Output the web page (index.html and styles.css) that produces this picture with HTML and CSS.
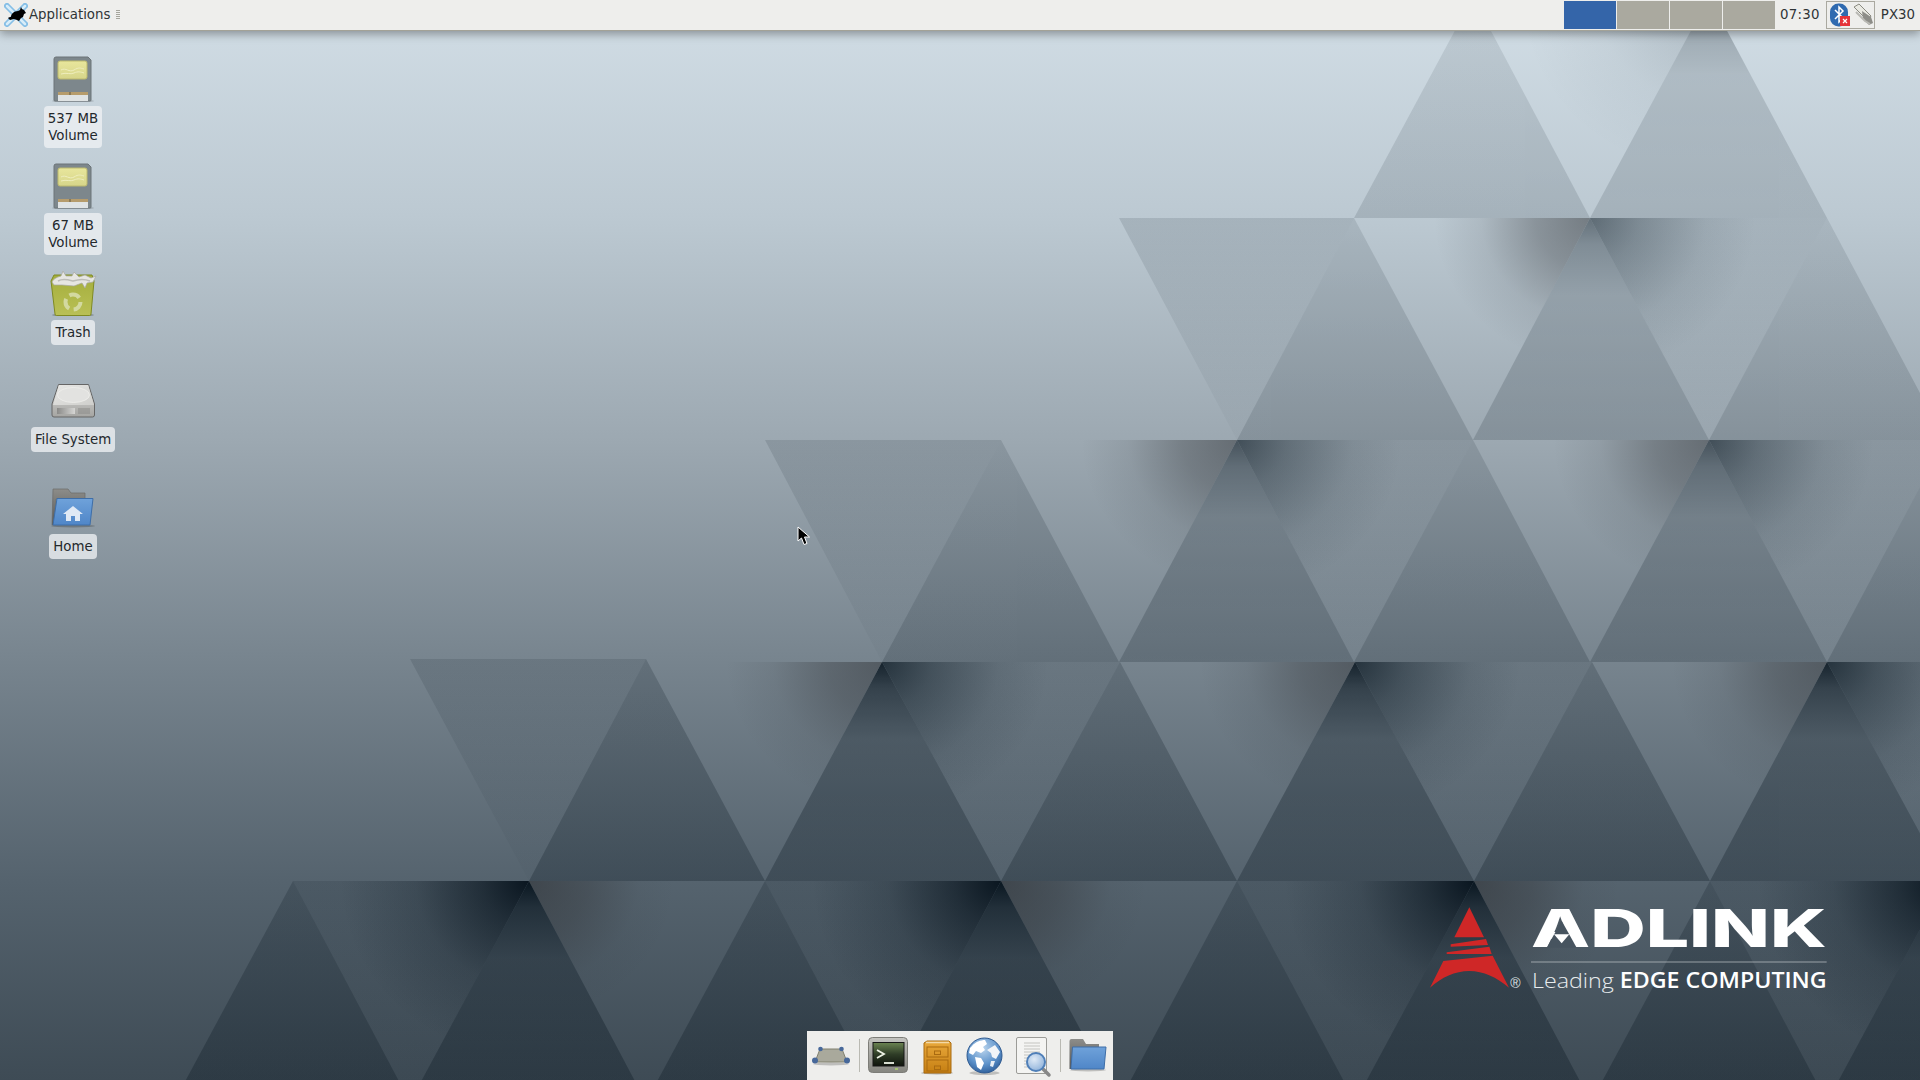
FILE: index.html
```html
<!DOCTYPE html>
<html lang="en">
<head>
  <meta charset="UTF-8" />
  <title>Desktop</title>
  <link rel="stylesheet" href="styles.css">
</head>
<body>

  <div class="panel">
    <div class="panel-left">
      <svg class="menu-logo" width="24" height="24" viewBox="0 0 24 24">
        <path d="M3 3 21 21M21 3 3 21" stroke="#86bfe6" stroke-width="6" stroke-linecap="round"/>
        <path d="M3 3 21 21M21 3 3 21" stroke="#d8edf9" stroke-width="2.5" stroke-linecap="round"/>
        <path d="M4 15c1-1 2-1 3-1 0-3 3-6 7-6l2-1 1-3 1 2 2 1 2 3-2 1-1 3-2 1-2 3-2-1-3-1-4 1-2-2z" fill="#000"/>
      </svg>
      <span class="menu-label">Applications</span>
      <span class="menu-handle"></span>
    </div>
    <div class="panel-right">
      <div class="pager">
        <div class="pager-cell active"></div>
        <div class="pager-cell"></div>
        <div class="pager-cell"></div>
        <div class="pager-cell"></div>
      </div>
      <span class="clock">07:30</span>
      <div class="tray">
        <svg width="47" height="26" viewBox="0 0 47 26">
          <rect x="3" y="1.500" width="18" height="23" rx="8.500" fill="#2f6ab0"/>
          <path d="M8 8 16 16 12 20V5L16 9 8 17" fill="none" stroke="#fff" stroke-width="1.500"/>
          <rect x="13" y="14" width="10" height="10" fill="#e5343a"/>
          <path d="M16 17 20 21M20 17 16 21" stroke="#fff" stroke-width="1.200"/>
          <path d="M27 5 32 2 44 14 41 19Z" fill="#e9e9e2" stroke="#8a8a80"/>
          <path d="M35 9 44 15 46 21 42 23 36 17Z" fill="#8d8d88"/>
          <path d="M29 10 38 19 43 22" fill="none" stroke="#b9b9b4" stroke-width="2"/>
        </svg>
      </div>
      <span class="host">PX30</span>
    </div>
  </div>

  <div class="desktop">
    <svg class="wallpaper" width="1920" height="1080" viewBox="0 0 1920 1080">
      <defs>
        <linearGradient id="base" x1="0" y1="0" x2="0" y2="1">
          <stop offset="0" stop-color="#d2dee6"/>
          <stop offset=".2" stop-color="#bcc9d2"/>
          <stop offset=".41" stop-color="#9ca8b1"/>
          <stop offset=".613" stop-color="#77848e"/>
          <stop offset=".816" stop-color="#55636e"/>
          <stop offset="1" stop-color="#3e4b55"/>
        </linearGradient>
        <linearGradient id="upFlat" x1="0" y1="0" x2="0" y2="1">
          <stop offset="0" stop-color="#05121c" stop-opacity=".2"/>
          <stop offset="1" stop-color="#05121c" stop-opacity=".3"/>
        </linearGradient>
        <linearGradient id="upDark" x1="0" y1="0" x2="0" y2="1">
          <stop offset="0" stop-color="#05121c" stop-opacity=".95"/>
          <stop offset=".12" stop-color="#05121c" stop-opacity=".62"/>
          <stop offset=".35" stop-color="#05121c" stop-opacity=".33"/>
          <stop offset="1" stop-color="#05121c" stop-opacity=".3"/>
        </linearGradient>
        <linearGradient id="downDim" x1="0" y1="0" x2="0" y2="1">
          <stop offset="0" stop-color="#05121c" stop-opacity=".12"/>
          <stop offset="1" stop-color="#05121c" stop-opacity=".02"/>
        </linearGradient>
        <radialGradient id="brownR" cx="1" cy="0" r=".66">
          <stop offset="0" stop-color="#33363a" stop-opacity=".52"/>
          <stop offset=".35" stop-color="#33363a" stop-opacity=".36"/>
          <stop offset=".7" stop-color="#33363a" stop-opacity=".1"/>
          <stop offset="1" stop-color="#33363a" stop-opacity="0"/>
        </radialGradient>
        <radialGradient id="brownL" cx="0" cy="0" r=".62">
          <stop offset="0" stop-color="#2a2a2c" stop-opacity=".5"/>
          <stop offset=".4" stop-color="#2a2a2c" stop-opacity=".3"/>
          <stop offset=".75" stop-color="#2a2a2c" stop-opacity=".05"/>
          <stop offset="1" stop-color="#2a2a2c" stop-opacity="0"/>
        </radialGradient>
        <radialGradient id="blueL" cx="0" cy="0" r=".7">
          <stop offset="0" stop-color="#0c1a24" stop-opacity=".72"/>
          <stop offset=".3" stop-color="#0c1a24" stop-opacity=".4"/>
          <stop offset=".7" stop-color="#0c1a24" stop-opacity=".1"/>
          <stop offset="1" stop-color="#0c1a24" stop-opacity="0"/>
        </radialGradient>
        <radialGradient id="blackR" cx="1" cy="0" r=".8">
          <stop offset="0" stop-color="#06121c" stop-opacity=".95"/>
          <stop offset=".25" stop-color="#06121c" stop-opacity=".6"/>
          <stop offset=".6" stop-color="#06121c" stop-opacity=".2"/>
          <stop offset="1" stop-color="#06121c" stop-opacity="0"/>
        </radialGradient>
      </defs>
      <rect width="1920" height="1080" fill="url(#base)"/>

      <g class="row1">
        <polygon points="1473,-3 1590,218 1354,218" fill="url(#upFlat)"/>
        <polygon points="1709,-3 1827,218 1590,218" fill="url(#upDark)"/>
      </g>
      <polygon class="corner1" points="1473,-3 1709,-3 1590,218" fill="url(#blackR)"/>

      <g class="row2">
        <polygon points="1354,218 1473,440 1237,440" fill="url(#upFlat)"/>
        <polygon points="1590,218 1709,440 1473,440" fill="url(#upDark)"/>
        <polygon points="1827,218 1945,440 1709,440" fill="url(#upFlat)"/>
      </g>
      <polygon points="1119,218 1354,218 1237,440" fill="url(#downDim)"/>
      <polygon points="1354,218 1590,218 1473,440" fill="url(#brownR)"/>
      <polygon points="1590,218 1827,218 1709,440" fill="url(#downDim)"/>
      <polygon class="corner2" points="1590,218 1827,218 1709,440" fill="url(#blueL)"/>

      <g class="row3">
        <polygon points="1001,440 1119,662 882,662" fill="url(#upFlat)"/>
        <polygon points="1237,440 1354,662 1119,662" fill="url(#upDark)"/>
        <polygon points="1473,440 1590,662 1354,662" fill="url(#upFlat)"/>
        <polygon points="1709,440 1827,662 1590,662" fill="url(#upDark)"/>
        <polygon points="1945,440 2063,662 1827,662" fill="url(#upFlat)"/>
      </g>
      <polygon points="765,440 1001,440 882,662" fill="url(#downDim)"/>
      <polygon points="1001,440 1237,440 1119,662" fill="url(#brownR)"/>
      <polygon points="1237,440 1473,440 1354,662" fill="url(#downDim)"/>
      <polygon class="corner3" points="1237,440 1473,440 1354,662" fill="url(#blueL)"/>
      <polygon points="1473,440 1709,440 1590,662" fill="url(#brownR)"/>
      <polygon points="1709,440 1945,440 1827,662" fill="url(#downDim)"/>
      <polygon class="corner3" points="1709,440 1945,440 1827,662" fill="url(#blueL)"/>

      <g class="row4">
        <polygon points="646,659 765,881 529,881" fill="url(#upFlat)"/>
        <polygon points="882,662 1001,881 765,881" fill="url(#upDark)"/>
        <polygon points="1120,662 1237,881 1001,881" fill="url(#upFlat)"/>
        <polygon points="1355,662 1474,881 1237,881" fill="url(#upDark)"/>
        <polygon points="1592,662 1710,881 1474,881" fill="url(#upFlat)"/>
        <polygon points="1827,662 1946,881 1710,881" fill="url(#upDark)"/>
      </g>
      <polygon points="410,659 646,659 529,881" fill="url(#downDim)"/>
      <polygon points="646,662 882,662 765,881" fill="url(#brownR)"/>
      <polygon points="882,662 1120,662 1001,881" fill="url(#downDim)"/>
      <polygon class="corner4" points="882,662 1120,662 1001,881" fill="url(#blueL)"/>
      <polygon points="1120,662 1355,662 1237,881" fill="url(#brownR)"/>
      <polygon points="1355,662 1592,662 1474,881" fill="url(#downDim)"/>
      <polygon class="corner4" points="1355,662 1592,662 1474,881" fill="url(#blueL)"/>
      <polygon points="1592,662 1827,662 1710,881" fill="url(#brownR)"/>
      <polygon points="1827,662 2063,662 1946,881" fill="url(#downDim)"/>
      <polygon class="corner4" points="1827,662 2063,662 1946,881" fill="url(#blueL)"/>

      <g class="row5">
        <polygon points="293,881 410,1102 174,1102" fill="url(#upFlat)"/>
        <polygon points="529,881 646,1102 410,1102" fill="url(#upDark)"/>
        <polygon points="765,881 882,1102 646,1102" fill="url(#upFlat)"/>
        <polygon points="1001,881 1119,1102 882,1102" fill="url(#upDark)"/>
        <polygon points="1237,881 1355,1102 1119,1102" fill="url(#upFlat)"/>
        <polygon points="1474,881 1591,1102 1355,1102" fill="url(#upDark)"/>
        <polygon points="1710,881 1827,1102 1591,1102" fill="url(#upFlat)"/>
        <polygon points="1946,881 2063,1102 1827,1102" fill="url(#upDark)"/>
      </g>
      <polygon points="293,881 529,881 410,1102" fill="url(#downDim)"/>
      <polygon points="293,881 529,881 410,1102" fill="url(#blackR)"/>
      <polygon points="529,881 765,881 646,1102" fill="url(#brownL)"/>
      <polygon points="765,881 1001,881 882,1102" fill="url(#downDim)"/>
      <polygon points="765,881 1001,881 882,1102" fill="url(#blackR)"/>
      <polygon points="1001,881 1237,881 1119,1102" fill="url(#brownL)"/>
      <polygon points="1237,881 1474,881 1355,1102" fill="url(#downDim)"/>
      <polygon points="1237,881 1474,881 1355,1102" fill="url(#blackR)"/>
      <polygon points="1474,881 1710,881 1591,1102" fill="url(#brownL)"/>
      <polygon points="1710,881 1946,881 1827,1102" fill="url(#downDim)"/>
      <polygon points="1710,881 1946,881 1827,1102" fill="url(#blackR)"/>
    </svg>

    <svg class="adlink" width="440" height="120" viewBox="0 0 1320 360">
      <path d="M178 52 222 142H133Z" fill="#cf2727"/>
      <path d="M122 163 228 147 234 165 122 170Z" fill="#cf2727"/>
      <path d="M110 187 238 170 245 192 110 192Z" fill="#cf2727"/>
      <path d="M100 213 248 197 297 293C260 262 220 243 178 243 135 243 95 262 60 293Z" fill="#cf2727"/>
      <text class="adlink-reg" x="301" y="293">®</text>
      <text class="adlink-word" x="363" y="172" textLength="887" lengthAdjust="spacingAndGlyphs">ADLINK</text>
      <path d="M455 92 500 173H410Z" fill="#47545f"/>
      <path d="M432 133H478L455 160Z" fill="#fff"/>
      <rect x="363" y="215" width="887" height="2" fill="#c6ccd0"/>
      <text class="adlink-tag" x="366" y="294" textLength="884" lengthAdjust="spacingAndGlyphs">Leading <tspan class="adlink-tag-bold">EDGE COMPUTING</tspan></text>
    </svg>

    <div class="desk-icons">
      <div class="desk-item">
        <svg width="48" height="48" viewBox="0 0 48 48">
          <defs>
            <linearGradient id="chip" x1="0" y1="0" x2="0" y2="1">
              <stop offset="0" stop-color="#e8e69c"/>
              <stop offset="1" stop-color="#d6d58a"/>
            </linearGradient>
          </defs>
          <ellipse cx="24" cy="47" rx="21" ry="1.500" fill="#000" opacity=".18"/>
          <path d="M7 3H39L42 6V46a1 1 0 0 1-1 1H6a1 1 0 0 1-1-1V5a2 2 0 0 1 2-2Z" fill="#7d878c" stroke="#6c7478"/>
          <rect x="9" y="7" width="29" height="18" rx="2" fill="url(#chip)" stroke="#bcb96e"/>
          <path d="M12 16c5-3 8 3 13 0s6-2 10-1M12 20c6-2 9 1 13-1s7-1 10 0" fill="none" stroke="#efeebe"/>
          <rect x="9" y="38" width="30" height="3" fill="#b69c6c"/>
          <rect x="20" y="38" width="2" height="3" fill="#8c7a55"/>
          <rect x="9" y="41" width="30" height="6" fill="#dfe3e4"/>
        </svg>
        <div class="desk-label">537 MB<br>Volume</div>
      </div>
      <div class="desk-item">
        <svg width="48" height="48" viewBox="0 0 48 48">
          <ellipse cx="24" cy="47" rx="21" ry="1.500" fill="#000" opacity=".18"/>
          <path d="M7 3H39L42 6V46a1 1 0 0 1-1 1H6a1 1 0 0 1-1-1V5a2 2 0 0 1 2-2Z" fill="#7d878c" stroke="#6c7478"/>
          <rect x="9" y="7" width="29" height="18" rx="2" fill="url(#chip)" stroke="#bcb96e"/>
          <path d="M12 16c5-3 8 3 13 0s6-2 10-1M12 20c6-2 9 1 13-1s7-1 10 0" fill="none" stroke="#efeebe"/>
          <rect x="9" y="38" width="30" height="3" fill="#b69c6c"/>
          <rect x="20" y="38" width="2" height="3" fill="#8c7a55"/>
          <rect x="9" y="41" width="30" height="6" fill="#dfe3e4"/>
        </svg>
        <div class="desk-label">67 MB<br>Volume</div>
      </div>
      <div class="desk-item">
        <svg width="48" height="48" viewBox="0 0 48 48">
          <defs>
            <linearGradient id="bin" x1="0" y1="0" x2="0" y2="1">
              <stop offset="0" stop-color="#a4ae3c"/>
              <stop offset="1" stop-color="#b9c056"/>
            </linearGradient>
          </defs>
          <ellipse cx="24" cy="47" rx="21" ry="1.500" fill="#000" opacity=".3"/>
          <path d="M2 13 5 7H43L45 13 42 46a1.500 1.500 0 0 1-1.500 1.500H7.500A1.500 1.500 0 0 1 6 46Z" fill="url(#bin)" stroke="#7f8a22"/>
          <path d="M3 14C5 10 9 9 12 8L14 3 17 8 23 8 25 4 30 9 36 7 42 10 47 8 44 14 38 15 36 20 33 15 25 18 13 17 5 17Z" fill="#e6e6e2" stroke="#a8a8a4" stroke-width=".7"/>
          <path d="M9 13C14 10 20 12 24 13 30 11 36 11 41 13" stroke="#bdbdb8" fill="none" stroke-width="1.500"/>
          <circle cx="24" cy="34" r="7.500" fill="none" stroke="#d3d9a0" stroke-width="4" stroke-dasharray="11 4.700"/>
        </svg>
        <div class="desk-label">Trash</div>
      </div>
      <div class="desk-item">
        <svg width="48" height="48" viewBox="0 0 48 48">
          <defs>
            <linearGradient id="hdTop" x1="0" y1="0" x2="1" y2="1">
              <stop offset="0" stop-color="#e8e8e6"/>
              <stop offset="1" stop-color="#cfcfcc"/>
            </linearGradient>
            <linearGradient id="hdFront" x1="0" y1="0" x2="0" y2="1">
              <stop offset="0" stop-color="#dcdcda"/>
              <stop offset="1" stop-color="#a5a5a2"/>
            </linearGradient>
            <linearGradient id="hdSlot" x1="0" y1="0" x2="1" y2="0">
              <stop offset="0" stop-color="#8a8a88"/>
              <stop offset="1" stop-color="#d6d6d4"/>
            </linearGradient>
          </defs>
          <path d="M9.500 9.500H39.500L45.500 29V40a2 2 0 0 1-2 2H5a2 2 0 0 1-2-2V29Z" fill="url(#hdFront)" stroke="#666"/>
          <path d="M10 10H39L45 30H4Z" fill="url(#hdTop)"/>
          <ellipse cx="24.500" cy="20" rx="16" ry="7.500" fill="#e2e2e0" stroke="#f0f0ee" stroke-width=".7"/>
          <rect x="8" y="33" width="18" height="6" fill="url(#hdSlot)"/>
          <path d="M30 33v6M32 33v6M34 33v6M36 33v6M38 33v6M40 33v6" stroke="#8a8a88"/>
        </svg>
        <div class="desk-label">File System</div>
      </div>
      <div class="desk-item">
        <svg width="48" height="48" viewBox="0 0 48 48">
          <defs>
            <linearGradient id="blueFold" x1="0" y1="0" x2="0" y2="1">
              <stop offset="0" stop-color="#6fa2da"/>
              <stop offset="1" stop-color="#4f86c8"/>
            </linearGradient>
            <linearGradient id="grayFold" x1="0" y1="0" x2="0" y2="1">
              <stop offset="0" stop-color="#8d8d8a"/>
              <stop offset="1" stop-color="#555553"/>
            </linearGradient>
          </defs>
          <ellipse cx="24" cy="44" rx="22" ry="1.500" fill="#000" opacity=".22"/>
          <path d="M4 7H19L22 11H36V17H7V43H3Z" fill="url(#grayFold)" stroke="#6a6a68" stroke-width=".7"/>
          <path d="M8 16.500H44L41 43H4Z" fill="url(#blueFold)" stroke="#3e6ea8"/>
          <path d="M24 24 34 32H31V39H26V34H22V39H17V32H14Z" fill="#dfe9f5"/>
        </svg>
        <div class="desk-label">Home</div>
      </div>
    </div>

    <div class="dock">
      <svg width="40" height="40" viewBox="0 0 40 40">
        <ellipse cx="20" cy="27" rx="18" ry="1.500" fill="#000" opacity=".2"/>
        <path d="M9 12H31L36 25H4Z" fill="#a9a99c" stroke="#80806f"/>
        <circle cx="9.500" cy="12" r="2.300" fill="#47689a"/>
        <circle cx="30.500" cy="12" r="2.300" fill="#47689a"/>
        <circle cx="4" cy="23.500" r="3" fill="#47689a"/>
        <circle cx="36" cy="23.500" r="3" fill="#47689a"/>
      </svg>
      <div class="dock-sep"></div>
      <svg width="40" height="40" viewBox="0 0 40 40">
        <defs>
          <linearGradient id="term" x1="0" y1="0" x2="0" y2="1">
            <stop offset="0" stop-color="#6b8452"/>
            <stop offset=".5" stop-color="#2f3d27"/>
            <stop offset="1" stop-color="#0f140d"/>
          </linearGradient>
          <linearGradient id="bezel" x1="0" y1="0" x2="0" y2="1">
            <stop offset="0" stop-color="#c4c4c0"/>
            <stop offset="1" stop-color="#85857f"/>
          </linearGradient>
        </defs>
        <rect x=".5" y=".5" width="39" height="35" rx="4" fill="url(#bezel)" stroke="#7d7d78"/>
        <rect x="5" y="5.500" width="31" height="23.500" fill="url(#term)" stroke="#161616"/>
        <path d="M9 13 16 17 9 21" fill="none" stroke="#eef3e6" stroke-width="1.800"/>
        <path d="M16 26H26" stroke="#eef3e6" stroke-width="1.800"/>
        <rect x="27" y="31" width="3" height="2" fill="#a3c26f"/>
      </svg>
      <svg width="40" height="40" viewBox="0 0 40 40">
        <defs>
          <linearGradient id="cab" x1="0" y1="0" x2="0" y2="1">
            <stop offset="0" stop-color="#e9a93c"/>
            <stop offset="1" stop-color="#c67f12"/>
          </linearGradient>
        </defs>
        <ellipse cx="21" cy="36" rx="16" ry="1.500" fill="#000" opacity=".25"/>
        <path d="M11 4H33L35 6V36H8V6Z" fill="url(#cab)" stroke="#a96a10"/>
        <path d="M10 5.500H33" stroke="#f3d9a8" stroke-width="1.500"/>
        <rect x="11" y="10" width="21" height="10" fill="none" stroke="#a96a10"/>
        <rect x="11" y="23" width="21" height="11" fill="none" stroke="#a96a10"/>
        <rect x="18.500" y="14" width="6" height="3.500" fill="none" stroke="#a96a10"/>
        <rect x="18.500" y="29" width="6" height="3.500" fill="none" stroke="#a96a10"/>
      </svg>
      <svg width="40" height="40" viewBox="0 0 40 40">
        <defs>
          <radialGradient id="globe" cx=".45" cy=".3" r=".75">
            <stop offset="0" stop-color="#bcd6ee"/>
            <stop offset=".6" stop-color="#5e93cb"/>
            <stop offset="1" stop-color="#2a5a96"/>
          </radialGradient>
        </defs>
        <ellipse cx="20.500" cy="36" rx="15" ry="2" fill="#000" opacity=".2"/>
        <circle cx="20.500" cy="18.500" r="17.500" fill="url(#globe)" stroke="#2f5a90"/>
        <path d="M8 9C11 5 17 3 21 3L23 7 19 10 21 13 17 16 12 14 9 18 5 16 6 11Z" fill="#fff"/>
        <path d="M23 13 31 8 36 15 32 22 28 20 27 16Z" fill="#f2f5f8"/>
        <path d="M11 20 17 21 20 26 17 33 13 30 12 25Z" fill="#fff"/>
        <path d="M27 24 31 24 29 30 26 29Z" fill="#e8eef5"/>
      </svg>
      <svg class="dock-doc" width="40" height="40" viewBox="0 0 40 40">
        <defs>
          <radialGradient id="lens" cx=".4" cy=".35" r=".7">
            <stop offset="0" stop-color="#dfeaf6"/>
            <stop offset="1" stop-color="#8fb2da"/>
          </radialGradient>
        </defs>
        <rect x="5.500" y=".5" width="30" height="36" rx="1.500" fill="#f4f4f2" stroke="#9c9c98"/>
        <path d="M13 6H29M13 9H29M13 12H29M13 15H29M13 18H29M13 21H20M13 24H18M13 27H18M13 30H24" stroke="#c4c4c0"/>
        <path d="M31 31 38 38" stroke="#888" stroke-width="3.500" stroke-linecap="round"/>
        <circle cx="25" cy="25" r="9" fill="url(#lens)" stroke="#4f7fb8" stroke-width="2"/>
      </svg>
      <div class="dock-sep"></div>
      <svg width="40" height="40" viewBox="0 0 40 40">
        <ellipse cx="19" cy="33" rx="18" ry="1.500" fill="#000" opacity=".2"/>
        <path d="M.5 4a2 2 0 0 1 2-2H14L17 7H30V12H4L2 32H.5Z" fill="url(#grayFold)"/>
        <path d="M3.500 10H37L35 32H2Z" fill="url(#blueFold)" stroke="#3e6ea8"/>
      </svg>
    </div>

    <svg class="cursor" width="16" height="20" viewBox="0 0 16 20">
      <path d="M1 1V15L4.500 12 7 18.500 10 17.500 7.500 11H12.500Z" fill="#000" stroke="#fff"/>
    </svg>
  </div>

</body>
</html>
```

FILE: styles.css
```css
html, body {
  height: 100%;
  margin: 0;
  padding: 0;
  overflow: hidden;
  font-family: "DejaVu Sans", sans-serif;
  font-size: 13.33px;
  color: #2e3436;
}

body {
  display: flex;
  flex-direction: column;
  width: 1920px;
  height: 1080px;
}

.panel {
  position: relative;
  z-index: 2;
  height: 31px;
  flex: none;
  box-sizing: border-box;
  display: flex;
  justify-content: space-between;
  background-color: #eeeeec;
  border-bottom: 1px solid #a3a297;
  box-shadow: 0 3px 9px rgba(0,0,0,0.35);
}

.panel-left {
  display: flex;
  align-items: center;
  padding: 0 0 1px 4px;
}

.menu-logo {
  flex: none;
}

.menu-label {
  margin-left: 1px;
}

.menu-handle {
  width: 4px;
  height: 10px;
  margin-left: 6px;
  background: repeating-linear-gradient(#a5a59c 0 1px, transparent 1px 2px);
}

.panel-right {
  display: flex;
  align-items: center;
  padding: 0 5px 1px 0;
}

.pager {
  display: flex;
  gap: 1px;
  align-self: flex-start;
  padding-top: 1px;
}

.pager-cell {
  width: 52px;
  height: 28px;
  background-color: #aaa99f;
}

.pager-cell.active {
  background-color: #3465a9;
}

.clock {
  margin-left: 5px;
  letter-spacing: 0.3px;
}

.tray {
  width: 49px;
  height: 28px;
  box-sizing: border-box;
  margin: 1px 0 0 6px;
  align-self: flex-start;
  border: 1px solid #aaa9a0;
  display: flex;
  align-items: center;
}

.host {
  margin-left: 6px;
}

.desktop {
  position: relative;
  flex: 1;
}

.wallpaper {
  position: absolute;
  left: 0;
  top: -31px;
}

.row1 { opacity: 0.42; }
.row2 { opacity: 0.5; }
.row3 { opacity: 0.6; }
.row4 { opacity: 0.9; }
.row5 { opacity: 1; }

.corner1 { opacity: 0.2; }
.corner2 { opacity: 0.65; }
.corner3 { opacity: 0.8; }
.corner4 { opacity: 1; }

.adlink {
  position: absolute;
  left: 1410px;
  top: 859px;
}

.adlink-word {
  font-family: "Inter", "Liberation Sans", sans-serif;
  font-size: 157px;
  font-weight: 800;
  fill: #fff;
}

.adlink-tag {
  font-family: "Open Sans", sans-serif;
  font-size: 63px;
  font-weight: 300;
  fill: #e8ecee;
}

.adlink-tag-bold {
  font-weight: 600;
  fill: #fff;
}

.adlink-reg {
  font-family: "Liberation Sans", sans-serif;
  font-size: 42px;
  fill: #dfe3e6;
}

.desk-icons {
  position: relative;
  width: 146px;
  padding-top: 23px;
  display: flex;
  flex-direction: column;
}

.desk-item {
  height: 107px;
  display: flex;
  flex-direction: column;
  align-items: center;
}

.desk-item svg {
  flex: none;
}

.desk-label {
  margin-top: 4px;
  padding: 4px;
  border-radius: 4px;
  background-color: rgba(238,241,244,0.78);
  color: #23282c;
  line-height: 17px;
  text-align: center;
}

.dock {
  position: absolute;
  left: 50%;
  bottom: 0;
  width: 306px;
  height: 49px;
  margin-left: -153px;
  box-sizing: border-box;
  padding: 6px 0 0 4px;
  display: flex;
  gap: 8px;
  background-color: #eeeeec;
}

.dock svg {
  flex: none;
  overflow: visible;
}

.dock .dock-doc {
  margin: 0 1px 0 -1px;
}

.dock-sep {
  width: 1px;
  height: 33px;
  margin-top: 2px;
  background-color: #b9b9b2;
  flex: none;
}

.cursor {
  position: absolute;
  left: 797px;
  top: 495px;
}
```
